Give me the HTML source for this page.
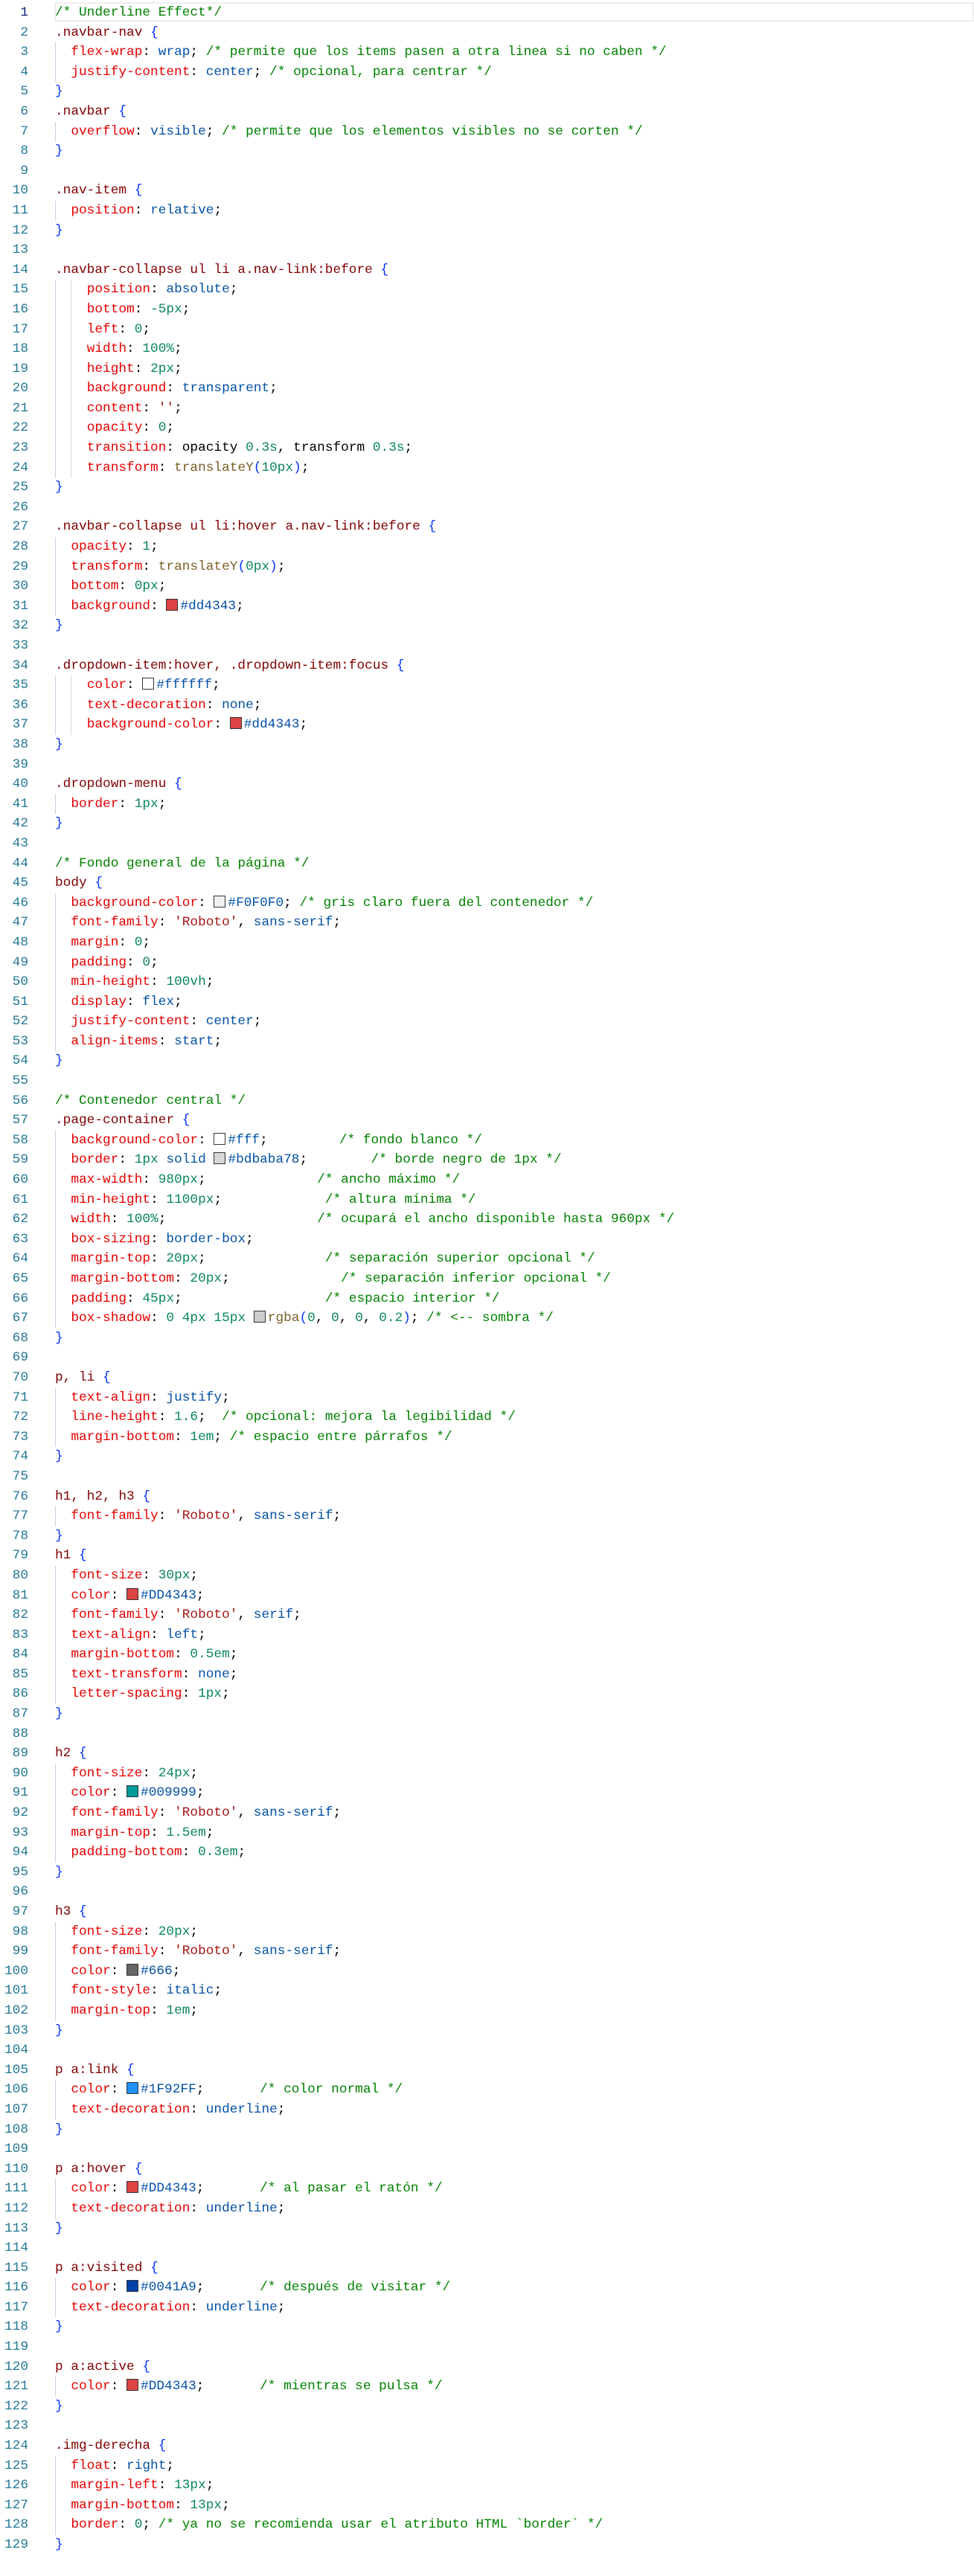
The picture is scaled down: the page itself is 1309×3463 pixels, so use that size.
<!DOCTYPE html>
<html><head><meta charset="utf-8"><style>
html,body{margin:0;padding:0;background:#fff;}
body{width:1309px;height:3463px;overflow:hidden;position:relative;font-family:"Liberation Mono",monospace;font-size:17.8px;}
#ed{position:absolute;top:4px;left:0;width:1309px;}
.l{position:relative;height:26.6px;line-height:26.6px;white-space:pre;}
.l .ln{position:absolute;left:0;width:38px;text-align:right;color:#237893;}
.l .t{position:absolute;left:74px;color:#000;}
.g1::before{content:"";position:absolute;left:74px;top:0;height:26.6px;border-left:1px solid #c9cfe6;}
.g2::after{content:"";position:absolute;left:95px;top:0;height:26.6px;border-left:1px solid #d8d8d8;}
.cur{position:absolute;left:73px;right:0;top:-1px;height:26px;border:2px solid #eeeeee;box-sizing:border-box;}
.p{color:#e50000}.v{color:#0451a5}.n{color:#098658}.c{color:#008000}.s{color:#800000}.b{color:#0431fa}.st{color:#a31515}.f{color:#795e26}.k{color:#000}
.sw{display:inline-block;width:14px;height:14px;border:1px solid #333;margin-right:3px;vertical-align:-2px;box-sizing:border-box;width:16px;height:16px;}
</style></head><body><div id="ed">
<div class="l"><span class="ln" style="color:#0b216f">1</span><div class="cur"></div><span class="t"><span class="c">/* Underline Effect*/</span></span></div>
<div class="l"><span class="ln">2</span><span class="t"><span class="s">.navbar-nav</span> <span class="b">{</span></span></div>
<div class="l g1"><span class="ln">3</span><span class="t">  <span class="p">flex-wrap</span>: <span class="v">wrap</span>; <span class="c">/* permite que los items pasen a otra linea si no caben */</span></span></div>
<div class="l g1"><span class="ln">4</span><span class="t">  <span class="p">justify-content</span>: <span class="v">center</span>; <span class="c">/* opcional, para centrar */</span></span></div>
<div class="l"><span class="ln">5</span><span class="t"><span class="b">}</span></span></div>
<div class="l"><span class="ln">6</span><span class="t"><span class="s">.navbar</span> <span class="b">{</span></span></div>
<div class="l g1"><span class="ln">7</span><span class="t">  <span class="p">overflow</span>: <span class="v">visible</span>; <span class="c">/* permite que los elementos visibles no se corten */</span></span></div>
<div class="l"><span class="ln">8</span><span class="t"><span class="b">}</span></span></div>
<div class="l"><span class="ln">9</span></div>
<div class="l"><span class="ln">10</span><span class="t"><span class="s">.nav-item</span> <span class="b">{</span></span></div>
<div class="l g1"><span class="ln">11</span><span class="t">  <span class="p">position</span>: <span class="v">relative</span>;</span></div>
<div class="l"><span class="ln">12</span><span class="t"><span class="b">}</span></span></div>
<div class="l"><span class="ln">13</span></div>
<div class="l"><span class="ln">14</span><span class="t"><span class="s">.navbar-collapse ul li a.nav-link:before</span> <span class="b">{</span></span></div>
<div class="l g1 g2"><span class="ln">15</span><span class="t">    <span class="p">position</span>: <span class="v">absolute</span>;</span></div>
<div class="l g1 g2"><span class="ln">16</span><span class="t">    <span class="p">bottom</span>: <span class="n">-5px</span>;</span></div>
<div class="l g1 g2"><span class="ln">17</span><span class="t">    <span class="p">left</span>: <span class="n">0</span>;</span></div>
<div class="l g1 g2"><span class="ln">18</span><span class="t">    <span class="p">width</span>: <span class="n">100%</span>;</span></div>
<div class="l g1 g2"><span class="ln">19</span><span class="t">    <span class="p">height</span>: <span class="n">2px</span>;</span></div>
<div class="l g1 g2"><span class="ln">20</span><span class="t">    <span class="p">background</span>: <span class="v">transparent</span>;</span></div>
<div class="l g1 g2"><span class="ln">21</span><span class="t">    <span class="p">content</span>: <span class="st">''</span>;</span></div>
<div class="l g1 g2"><span class="ln">22</span><span class="t">    <span class="p">opacity</span>: <span class="n">0</span>;</span></div>
<div class="l g1 g2"><span class="ln">23</span><span class="t">    <span class="p">transition</span>: opacity <span class="n">0.3s</span>, transform <span class="n">0.3s</span>;</span></div>
<div class="l g1 g2"><span class="ln">24</span><span class="t">    <span class="p">transform</span>: <span class="f">translateY</span><span class="b">(</span><span class="n">10px</span><span class="b">)</span>;</span></div>
<div class="l"><span class="ln">25</span><span class="t"><span class="b">}</span></span></div>
<div class="l"><span class="ln">26</span></div>
<div class="l"><span class="ln">27</span><span class="t"><span class="s">.navbar-collapse ul li:hover a.nav-link:before</span> <span class="b">{</span></span></div>
<div class="l g1"><span class="ln">28</span><span class="t">  <span class="p">opacity</span>: <span class="n">1</span>;</span></div>
<div class="l g1"><span class="ln">29</span><span class="t">  <span class="p">transform</span>: <span class="f">translateY</span><span class="b">(</span><span class="n">0px</span><span class="b">)</span>;</span></div>
<div class="l g1"><span class="ln">30</span><span class="t">  <span class="p">bottom</span>: <span class="n">0px</span>;</span></div>
<div class="l g1"><span class="ln">31</span><span class="t">  <span class="p">background</span>: <span class="sw" style="background:#dd4343"></span><span class="v">#dd4343</span>;</span></div>
<div class="l"><span class="ln">32</span><span class="t"><span class="b">}</span></span></div>
<div class="l"><span class="ln">33</span></div>
<div class="l"><span class="ln">34</span><span class="t"><span class="s">.dropdown-item:hover, .dropdown-item:focus</span> <span class="b">{</span></span></div>
<div class="l g1 g2"><span class="ln">35</span><span class="t">    <span class="p">color</span>: <span class="sw" style="background:#fff"></span><span class="v">#ffffff</span>;</span></div>
<div class="l g1 g2"><span class="ln">36</span><span class="t">    <span class="p">text-decoration</span>: <span class="v">none</span>;</span></div>
<div class="l g1 g2"><span class="ln">37</span><span class="t">    <span class="p">background-color</span>: <span class="sw" style="background:#dd4343"></span><span class="v">#dd4343</span>;</span></div>
<div class="l"><span class="ln">38</span><span class="t"><span class="b">}</span></span></div>
<div class="l"><span class="ln">39</span></div>
<div class="l"><span class="ln">40</span><span class="t"><span class="s">.dropdown-menu</span> <span class="b">{</span></span></div>
<div class="l g1"><span class="ln">41</span><span class="t">  <span class="p">border</span>: <span class="n">1px</span>;</span></div>
<div class="l"><span class="ln">42</span><span class="t"><span class="b">}</span></span></div>
<div class="l"><span class="ln">43</span></div>
<div class="l"><span class="ln">44</span><span class="t"><span class="c">/* Fondo general de la página */</span></span></div>
<div class="l"><span class="ln">45</span><span class="t"><span class="s">body</span> <span class="b">{</span></span></div>
<div class="l g1"><span class="ln">46</span><span class="t">  <span class="p">background-color</span>: <span class="sw" style="background:#f0f0f0"></span><span class="v">#F0F0F0</span>; <span class="c">/* gris claro fuera del contenedor */</span></span></div>
<div class="l g1"><span class="ln">47</span><span class="t">  <span class="p">font-family</span>: <span class="st">'Roboto'</span>, <span class="v">sans-serif</span>;</span></div>
<div class="l g1"><span class="ln">48</span><span class="t">  <span class="p">margin</span>: <span class="n">0</span>;</span></div>
<div class="l g1"><span class="ln">49</span><span class="t">  <span class="p">padding</span>: <span class="n">0</span>;</span></div>
<div class="l g1"><span class="ln">50</span><span class="t">  <span class="p">min-height</span>: <span class="n">100vh</span>;</span></div>
<div class="l g1"><span class="ln">51</span><span class="t">  <span class="p">display</span>: <span class="v">flex</span>;</span></div>
<div class="l g1"><span class="ln">52</span><span class="t">  <span class="p">justify-content</span>: <span class="v">center</span>;</span></div>
<div class="l g1"><span class="ln">53</span><span class="t">  <span class="p">align-items</span>: <span class="v">start</span>;</span></div>
<div class="l"><span class="ln">54</span><span class="t"><span class="b">}</span></span></div>
<div class="l"><span class="ln">55</span></div>
<div class="l"><span class="ln">56</span><span class="t"><span class="c">/* Contenedor central */</span></span></div>
<div class="l"><span class="ln">57</span><span class="t"><span class="s">.page-container</span> <span class="b">{</span></span></div>
<div class="l g1"><span class="ln">58</span><span class="t">  <span class="p">background-color</span>: <span class="sw" style="background:#fff"></span><span class="v">#fff</span>;         <span class="c">/* fondo blanco */</span></span></div>
<div class="l g1"><span class="ln">59</span><span class="t">  <span class="p">border</span>: <span class="n">1px</span> <span class="v">solid</span> <span class="sw" style="background:#d8d6d6"></span><span class="v">#bdbaba78</span>;        <span class="c">/* borde negro de 1px */</span></span></div>
<div class="l g1"><span class="ln">60</span><span class="t">  <span class="p">max-width</span>: <span class="n">980px</span>;              <span class="c">/* ancho máximo */</span></span></div>
<div class="l g1"><span class="ln">61</span><span class="t">  <span class="p">min-height</span>: <span class="n">1100px</span>;             <span class="c">/* altura mínima */</span></span></div>
<div class="l g1"><span class="ln">62</span><span class="t">  <span class="p">width</span>: <span class="n">100%</span>;                   <span class="c">/* ocupará el ancho disponible hasta 960px */</span></span></div>
<div class="l g1"><span class="ln">63</span><span class="t">  <span class="p">box-sizing</span>: <span class="v">border-box</span>;</span></div>
<div class="l g1"><span class="ln">64</span><span class="t">  <span class="p">margin-top</span>: <span class="n">20px</span>;               <span class="c">/* separación superior opcional */</span></span></div>
<div class="l g1"><span class="ln">65</span><span class="t">  <span class="p">margin-bottom</span>: <span class="n">20px</span>;              <span class="c">/* separación inferior opcional */</span></span></div>
<div class="l g1"><span class="ln">66</span><span class="t">  <span class="p">padding</span>: <span class="n">45px</span>;                  <span class="c">/* espacio interior */</span></span></div>
<div class="l g1"><span class="ln">67</span><span class="t">  <span class="p">box-shadow</span>: <span class="n">0 4px 15px</span> <span class="sw" style="background:#ccc"></span><span class="f">rgba</span><span class="b">(</span><span class="n">0</span>, <span class="n">0</span>, <span class="n">0</span>, <span class="n">0.2</span><span class="b">)</span>; <span class="c">/* &lt;-- sombra */</span></span></div>
<div class="l"><span class="ln">68</span><span class="t"><span class="b">}</span></span></div>
<div class="l"><span class="ln">69</span></div>
<div class="l"><span class="ln">70</span><span class="t"><span class="s">p, li</span> <span class="b">{</span></span></div>
<div class="l g1"><span class="ln">71</span><span class="t">  <span class="p">text-align</span>: <span class="v">justify</span>;</span></div>
<div class="l g1"><span class="ln">72</span><span class="t">  <span class="p">line-height</span>: <span class="n">1.6</span>;  <span class="c">/* opcional: mejora la legibilidad */</span></span></div>
<div class="l g1"><span class="ln">73</span><span class="t">  <span class="p">margin-bottom</span>: <span class="n">1em</span>; <span class="c">/* espacio entre párrafos */</span></span></div>
<div class="l"><span class="ln">74</span><span class="t"><span class="b">}</span></span></div>
<div class="l"><span class="ln">75</span></div>
<div class="l"><span class="ln">76</span><span class="t"><span class="s">h1, h2, h3</span> <span class="b">{</span></span></div>
<div class="l g1"><span class="ln">77</span><span class="t">  <span class="p">font-family</span>: <span class="st">'Roboto'</span>, <span class="v">sans-serif</span>;</span></div>
<div class="l"><span class="ln">78</span><span class="t"><span class="b">}</span></span></div>
<div class="l"><span class="ln">79</span><span class="t"><span class="s">h1</span> <span class="b">{</span></span></div>
<div class="l g1"><span class="ln">80</span><span class="t">  <span class="p">font-size</span>: <span class="n">30px</span>;</span></div>
<div class="l g1"><span class="ln">81</span><span class="t">  <span class="p">color</span>: <span class="sw" style="background:#dd4343"></span><span class="v">#DD4343</span>;</span></div>
<div class="l g1"><span class="ln">82</span><span class="t">  <span class="p">font-family</span>: <span class="st">'Roboto'</span>, <span class="v">serif</span>;</span></div>
<div class="l g1"><span class="ln">83</span><span class="t">  <span class="p">text-align</span>: <span class="v">left</span>;</span></div>
<div class="l g1"><span class="ln">84</span><span class="t">  <span class="p">margin-bottom</span>: <span class="n">0.5em</span>;</span></div>
<div class="l g1"><span class="ln">85</span><span class="t">  <span class="p">text-transform</span>: <span class="v">none</span>;</span></div>
<div class="l g1"><span class="ln">86</span><span class="t">  <span class="p">letter-spacing</span>: <span class="n">1px</span>;</span></div>
<div class="l"><span class="ln">87</span><span class="t"><span class="b">}</span></span></div>
<div class="l"><span class="ln">88</span></div>
<div class="l"><span class="ln">89</span><span class="t"><span class="s">h2</span> <span class="b">{</span></span></div>
<div class="l g1"><span class="ln">90</span><span class="t">  <span class="p">font-size</span>: <span class="n">24px</span>;</span></div>
<div class="l g1"><span class="ln">91</span><span class="t">  <span class="p">color</span>: <span class="sw" style="background:#009999"></span><span class="v">#009999</span>;</span></div>
<div class="l g1"><span class="ln">92</span><span class="t">  <span class="p">font-family</span>: <span class="st">'Roboto'</span>, <span class="v">sans-serif</span>;</span></div>
<div class="l g1"><span class="ln">93</span><span class="t">  <span class="p">margin-top</span>: <span class="n">1.5em</span>;</span></div>
<div class="l g1"><span class="ln">94</span><span class="t">  <span class="p">padding-bottom</span>: <span class="n">0.3em</span>;</span></div>
<div class="l"><span class="ln">95</span><span class="t"><span class="b">}</span></span></div>
<div class="l"><span class="ln">96</span></div>
<div class="l"><span class="ln">97</span><span class="t"><span class="s">h3</span> <span class="b">{</span></span></div>
<div class="l g1"><span class="ln">98</span><span class="t">  <span class="p">font-size</span>: <span class="n">20px</span>;</span></div>
<div class="l g1"><span class="ln">99</span><span class="t">  <span class="p">font-family</span>: <span class="st">'Roboto'</span>, <span class="v">sans-serif</span>;</span></div>
<div class="l g1"><span class="ln">100</span><span class="t">  <span class="p">color</span>: <span class="sw" style="background:#666"></span><span class="v">#666</span>;</span></div>
<div class="l g1"><span class="ln">101</span><span class="t">  <span class="p">font-style</span>: <span class="v">italic</span>;</span></div>
<div class="l g1"><span class="ln">102</span><span class="t">  <span class="p">margin-top</span>: <span class="n">1em</span>;</span></div>
<div class="l"><span class="ln">103</span><span class="t"><span class="b">}</span></span></div>
<div class="l"><span class="ln">104</span></div>
<div class="l"><span class="ln">105</span><span class="t"><span class="s">p a:link</span> <span class="b">{</span></span></div>
<div class="l g1"><span class="ln">106</span><span class="t">  <span class="p">color</span>: <span class="sw" style="background:#1f92ff"></span><span class="v">#1F92FF</span>;       <span class="c">/* color normal */</span></span></div>
<div class="l g1"><span class="ln">107</span><span class="t">  <span class="p">text-decoration</span>: <span class="v">underline</span>;</span></div>
<div class="l"><span class="ln">108</span><span class="t"><span class="b">}</span></span></div>
<div class="l"><span class="ln">109</span></div>
<div class="l"><span class="ln">110</span><span class="t"><span class="s">p a:hover</span> <span class="b">{</span></span></div>
<div class="l g1"><span class="ln">111</span><span class="t">  <span class="p">color</span>: <span class="sw" style="background:#dd4343"></span><span class="v">#DD4343</span>;       <span class="c">/* al pasar el ratón */</span></span></div>
<div class="l g1"><span class="ln">112</span><span class="t">  <span class="p">text-decoration</span>: <span class="v">underline</span>;</span></div>
<div class="l"><span class="ln">113</span><span class="t"><span class="b">}</span></span></div>
<div class="l"><span class="ln">114</span></div>
<div class="l"><span class="ln">115</span><span class="t"><span class="s">p a:visited</span> <span class="b">{</span></span></div>
<div class="l g1"><span class="ln">116</span><span class="t">  <span class="p">color</span>: <span class="sw" style="background:#0041a9"></span><span class="v">#0041A9</span>;       <span class="c">/* después de visitar */</span></span></div>
<div class="l g1"><span class="ln">117</span><span class="t">  <span class="p">text-decoration</span>: <span class="v">underline</span>;</span></div>
<div class="l"><span class="ln">118</span><span class="t"><span class="b">}</span></span></div>
<div class="l"><span class="ln">119</span></div>
<div class="l"><span class="ln">120</span><span class="t"><span class="s">p a:active</span> <span class="b">{</span></span></div>
<div class="l g1"><span class="ln">121</span><span class="t">  <span class="p">color</span>: <span class="sw" style="background:#dd4343"></span><span class="v">#DD4343</span>;       <span class="c">/* mientras se pulsa */</span></span></div>
<div class="l"><span class="ln">122</span><span class="t"><span class="b">}</span></span></div>
<div class="l"><span class="ln">123</span></div>
<div class="l"><span class="ln">124</span><span class="t"><span class="s">.img-derecha</span> <span class="b">{</span></span></div>
<div class="l g1"><span class="ln">125</span><span class="t">  <span class="p">float</span>: <span class="v">right</span>;</span></div>
<div class="l g1"><span class="ln">126</span><span class="t">  <span class="p">margin-left</span>: <span class="n">13px</span>;</span></div>
<div class="l g1"><span class="ln">127</span><span class="t">  <span class="p">margin-bottom</span>: <span class="n">13px</span>;</span></div>
<div class="l g1"><span class="ln">128</span><span class="t">  <span class="p">border</span>: <span class="n">0</span>; <span class="c">/* ya no se recomienda usar el atributo HTML `border` */</span></span></div>
<div class="l"><span class="ln">129</span><span class="t"><span class="b">}</span></span></div>
</div></body></html>
